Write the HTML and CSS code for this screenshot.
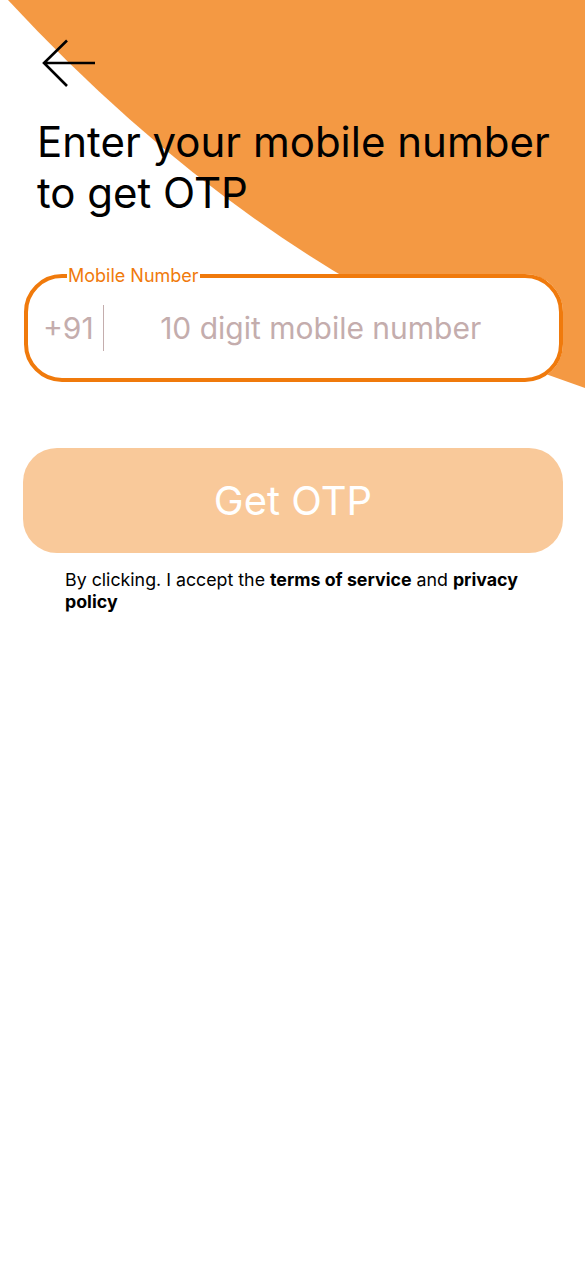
FILE: index.html
```html
<!DOCTYPE html>
<html lang="en">
<head>
<meta charset="utf-8">
<title>Enter mobile number</title>
<link rel="stylesheet" href="styles.css">
</head>
<body>
<div class="screen">
  <svg class="bg-shape" width="585" height="400" viewBox="0 0 585 400" aria-hidden="true">
    <path d="M8 0 Q270 283 585 388 L585 0 Z" fill="#F49943"/>
  </svg>
  <div class="content">
    <button class="back" aria-label="Back">
      <svg width="56" height="50" viewBox="0 0 56 50">
        <path d="M54 24 H3 M26 1.5 L3 24 L26 47" fill="none" stroke="#000" stroke-width="2.6" stroke-linecap="butt" stroke-linejoin="miter"/>
      </svg>
    </button>
    <h1 class="title">Enter your mobile number to get OTP</h1>
    <fieldset class="field">
      <legend class="field-label">Mobile Number</legend>
      <div class="field-row">
        <span class="code">+91</span>
        <span class="divider"></span>
        <span class="placeholder">10 digit mobile number</span>
      </div>
    </fieldset>
    <button class="cta">Get OTP</button>
    <p class="terms">By clicking. I accept the <b>terms of service</b> and <b>privacy policy</b></p>
  </div>
</div>
</body>
</html>
```

FILE: styles.css
```css
* { box-sizing: border-box; }
html, body { margin: 0; padding: 0; background: #fff; }
body { font-family: Inter, "Noto Sans", sans-serif; color: #000; }

.screen {
  position: relative;
  width: 585px;
  height: 1266px;
  overflow: hidden;
  background: #fff;
}

.bg-shape {
  position: absolute;
  top: 0;
  left: 0;
}

.content {
  position: relative;
  display: flex;
  flex-direction: column;
  padding: 39px 22px 0 23px;
}

.back {
  align-self: flex-start;
  margin-left: 18px;
  padding: 0;
  border: 0;
  background: none;
  width: 56px;
  height: 50px;
  display: block;
}
.back svg { display: block; }

.title {
  margin: 27px 0 0 14px;
  font-size: 42px;
  font-weight: 400;
  line-height: 51px;
  letter-spacing: 0;
  max-width: 530px;
}

.field {
  margin: 48px 0 0 1px;
  padding: 0 16px 0 15px;
  height: 116px;
  border: 4px solid #F07A0C;
  border-radius: 38px;
  background: #fff;
  min-width: 0;
}
.field-label {
  margin-left: 24px;
  padding: 0 1px;
  font-size: 18px;
  line-height: 20px;
  color: #F07A0C;
}
.field-row {
  display: flex;
  align-items: center;
  height: 84px;
}
.code {
  font-size: 30px;
  color: #C4ADAD;
}
.divider {
  width: 1.5px;
  height: 46px;
  margin-left: 9px;
  background: #C4ADAD;
}
.placeholder {
  margin-left: 56px;
  font-size: 30px;
  color: #C4ADAD;
}

.cta {
  margin-top: 66px;
  height: 105px;
  border: 0;
  border-radius: 34px;
  background: #F9C99A;
  color: #fff;
  font-family: Inter, "Noto Sans", sans-serif;
  font-size: 40px;
  font-weight: 400;
}

.terms {
  margin: 16px 0 0 42px;
  max-width: 466px;
  font-size: 17.8px;
  line-height: 22px;
}
.terms b { font-weight: 700; }
```
